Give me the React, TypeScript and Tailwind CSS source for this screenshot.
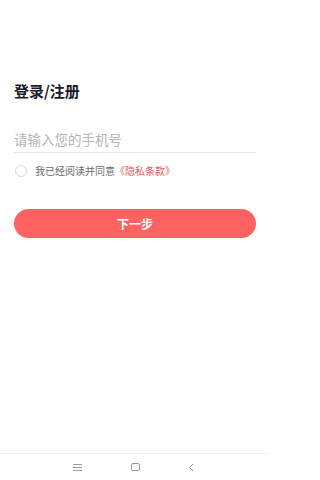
import React from "react";

export default function App() {
  return (
    <div
      className="w-[270px] h-[480px] bg-white flex flex-col"
      style={{ fontFamily: '"Noto Sans CJK SC", "Noto Sans", sans-serif' }}
    >
      <div className="flex-1 px-[14px] flex flex-col">
        <div className="h-[82px]" />
        <h1 className="text-[15px] leading-[18px] font-bold text-[#1a1a2a]">登录/注册</h1>
        <div className="h-[29px]" />
        <div className="text-[13.5px] leading-[20px] text-[#b4b4bc]">请输入您的手机号</div>
        <div className="h-[3px]" />
        <div className="h-px bg-[#e6e6e9]" />
        <div className="mt-[11px] flex items-center h-[14px]">
          <div className="w-[12px] h-[12px] rounded-full border border-[#d8d8dc] ml-[1px]" />
          <span className="ml-[8px] text-[10px] leading-[14px] text-[#6a6a70]">我已经阅读并同意</span>
          <span className="text-[10px] leading-[14px] text-[#e4575a]">《隐私条款》</span>
        </div>
        <div className="h-[31px]" />
        <button className="h-[29px] w-full rounded-full bg-[#ff6361] text-white text-[12px] font-bold flex items-center justify-center">
          下一步
        </button>
      </div>
      <div className="h-[27px] border-t border-[#efefef] flex items-center relative">
        <div className="absolute left-[73px] top-[10px] flex flex-col gap-[2px]">
          <div className="w-[9px] h-px bg-[#9a9a9a]" />
          <div className="w-[9px] h-px bg-[#9a9a9a]" />
          <div className="w-[9px] h-px bg-[#9a9a9a]" />
        </div>
        <div className="absolute left-[131px] top-[9px] w-[9px] h-[8px] rounded-[2px] border border-[#9a9a9a]" />
        <svg className="absolute left-[188px] top-[9px]" width="6" height="9" viewBox="0 0 6 9">
          <path d="M5 1 L1.5 4.5 L5 8" fill="none" stroke="#9a9a9a" strokeWidth="1" />
        </svg>
      </div>
    </div>
  );
}
